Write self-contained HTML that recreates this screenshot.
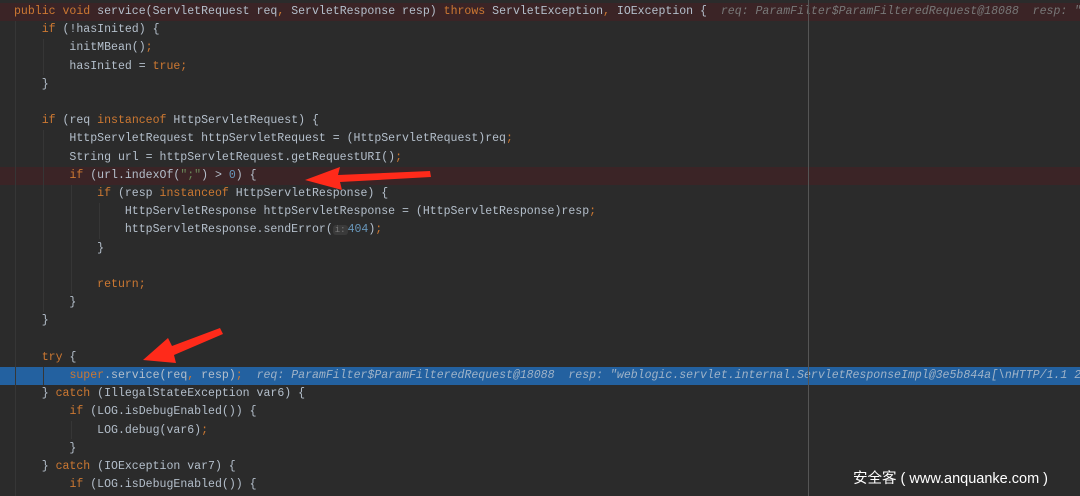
<!DOCTYPE html>
<html><head><meta charset="utf-8"><style>
body{margin:0;width:1080px;height:496px;background:#2b2b2b;overflow:hidden;position:relative;font-family:"Liberation Mono",monospace;font-size:11.55px;color:#b4bfcb}
.l{position:absolute;left:0;width:1080px;height:18.2px;line-height:18.2px;white-space:pre;padding-left:14px;box-sizing:border-box}
.k{color:#cc7832}.n{color:#6897bb}.s{color:#6a8759}.h{color:#787878;font-style:italic}
.red{background:#3b2426}.blue{background:#2361a0}
.blue .h{color:#9fb3c8}
.g{position:absolute;width:1px;background:#363636}
.vl{position:absolute;left:808px;top:0;width:1px;height:496px;background:#555}
.wm{position:absolute;left:853px;top:467px;font-family:"Liberation Sans","Noto Sans CJK SC",sans-serif;font-size:14.5px;color:#fff}
.pill{background:#3a3a3a;color:#777;border-radius:3px;font-size:9px;padding:0 2px}
</style></head><body>
<div class="l red" style="top:3px"><span class="k">public void </span>service(ServletRequest req<span class="k">, </span>ServletResponse resp) <span class="k">throws </span>ServletException<span class="k">, </span>IOException {  <span class="h">req: ParamFilter$ParamFilteredRequest@18088  resp: "</span></div>
<div class="l" style="top:21.2px">    <span class="k">if </span>(!hasInited) {</div>
<div class="l" style="top:39.4px">        initMBean()<span class="k">;</span></div>
<div class="l" style="top:57.6px">        hasInited = <span class="k">true;</span></div>
<div class="l" style="top:75.8px">    }</div>
<div class="l" style="top:112.2px">    <span class="k">if </span>(req <span class="k">instanceof </span>HttpServletRequest) {</div>
<div class="l" style="top:130.4px">        HttpServletRequest httpServletRequest = (HttpServletRequest)req<span class="k">;</span></div>
<div class="l" style="top:148.6px">        String url = httpServletRequest.getRequestURI()<span class="k">;</span></div>
<div class="l red" style="top:166.8px">        <span class="k">if </span>(url.indexOf(<span class="s">";"</span>) &gt; <span class="n">0</span>) {</div>
<div class="l" style="top:185px">            <span class="k">if </span>(resp <span class="k">instanceof </span>HttpServletResponse) {</div>
<div class="l" style="top:203.2px">                HttpServletResponse httpServletResponse = (HttpServletResponse)resp<span class="k">;</span></div>
<div class="l" style="top:221.4px">                httpServletResponse.sendError(<span class="pill">i:</span><span class="n">404</span>)<span class="k">;</span></div>
<div class="l" style="top:239.6px">            }</div>
<div class="l" style="top:276px">            <span class="k">return;</span></div>
<div class="l" style="top:294.2px">        }</div>
<div class="l" style="top:312.4px">    }</div>
<div class="l" style="top:348.8px">    <span class="k">try </span>{</div>
<div class="l blue" style="top:367px">        <span class="k">super</span>.service(req<span class="k">, </span>resp)<span class="k">;</span>  <span class="h">req: ParamFilter$ParamFilteredRequest@18088  resp: "weblogic.servlet.internal.ServletResponseImpl@3e5b844a[\nHTTP/1.1 2</span></div>
<div class="l" style="top:385.2px">    } <span class="k">catch </span>(IllegalStateException var6) {</div>
<div class="l" style="top:403.4px">        <span class="k">if </span>(LOG.isDebugEnabled()) {</div>
<div class="l" style="top:421.6px">            LOG.debug(var6)<span class="k">;</span></div>
<div class="l" style="top:439.8px">        }</div>
<div class="l" style="top:458px">    } <span class="k">catch </span>(IOException var7) {</div>
<div class="l" style="top:476.2px">        <span class="k">if </span>(LOG.isDebugEnabled()) {</div>
<div class="g" style="left:15px;top:21px;height:475px"></div>
<div class="g" style="left:43px;top:39px;height:36px"></div>
<div class="g" style="left:43px;top:130px;height:182px"></div>
<div class="g" style="left:71px;top:185px;height:109px"></div>
<div class="g" style="left:99px;top:203px;height:36px"></div>
<div class="g" style="left:43px;top:367px;height:18px"></div>
<div class="g" style="left:71px;top:421px;height:18px"></div>
<div class="vl"></div>
<svg style="position:absolute;left:0;top:0" width="1080" height="496">
<path d="M430 171 L338 175 L340 167 L305 180 L342 190 L340 182 L431 177 Z" fill="#ff2a1a"/>
<path d="M220 328 L172 346 L168 338 L143 360 L176 363 L174 355 L223 334 Z" fill="#ff2a1a"/>
</svg>
<div class="wm">安全客 ( www.anquanke.com )</div>
</body></html>
